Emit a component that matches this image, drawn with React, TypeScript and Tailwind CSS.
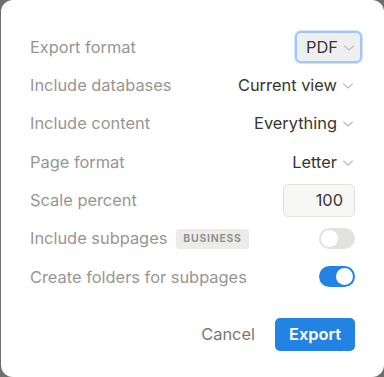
import React from "react";

function Chevron() {
  return (
    <svg width="12" height="10" viewBox="0 0 12 10" className="ml-[5px] mt-[1px]">
      <path d="M1.5 3 L6 7 L10.5 3" fill="none" stroke="#bdbcb9" strokeWidth="1.1" strokeLinecap="round" strokeLinejoin="round" />
    </svg>
  );
}

function Row({ label, children }: { label: React.ReactNode; children: React.ReactNode }) {
  return (
    <div className="flex h-[38.3px] items-center justify-between">
      <div className="flex items-center text-[16.4px] text-[#979693]">{label}</div>
      <div className="flex items-center">{children}</div>
    </div>
  );
}

function Select({ value }: { value: string }) {
  return (
    <div className="flex items-center pr-[1px] text-[16.4px] text-[#37352f]">
      {value}
      <Chevron />
    </div>
  );
}

function Toggle({ on }: { on: boolean }) {
  return (
    <div
      className={`flex h-[21px] w-[36px] items-center rounded-full p-[2px] ${
        on ? "justify-end bg-[#2383e2]" : "justify-start bg-[#e3e2e0]"
      }`}
    >
      <div className="h-[17px] w-[17px] rounded-full bg-white" />
    </div>
  );
}

export default function App() {
  return (
    <div className="h-[377px] w-[384px] bg-[#6f6f6f] pl-[1px]" style={{ fontFamily: "Inter, 'Noto Sans', sans-serif" }}>
      <div className="flex h-full flex-col rounded-[12px] bg-white pl-[29px] pr-[29px] pt-[28px]">
        <Row label="Export format">
          <div className="-mr-[7px] flex h-[32px] items-center rounded-[6px] border-2 border-[#a3c8f5] bg-[#efefef] pl-[9px] pr-[5px] text-[16.4px] text-[#37352f] shadow-[0_0_0_1px_#d2e4fa]">
            PDF
            <Chevron />
          </div>
        </Row>
        <Row label="Include databases">
          <Select value="Current view" />
        </Row>
        <Row label="Include content">
          <Select value="Everything" />
        </Row>
        <Row label="Page format">
          <Select value="Letter" />
        </Row>
        <Row label="Scale percent">
          <div className="flex h-[33px] w-[72px] items-center justify-end rounded-[5px] border border-[#e3e2e0] bg-[#f7f7f5] pr-[11px] text-[16.4px] text-[#37352f]">
            100
          </div>
        </Row>
        <Row
          label={
            <>
              Include subpages
              <span className="ml-[9px] rounded-[3px] bg-[#ebebea] px-[7px] py-[2px] text-[10.5px] font-semibold tracking-[0.07em] text-[#8c8b88]">
                BUSINESS
              </span>
            </>
          }
        >
          <Toggle on={false} />
        </Row>
        <Row label="Create folders for subpages">
          <Toggle on={true} />
        </Row>
        <div className="mt-[22px] flex items-center justify-end gap-[20px]">
          <button className="text-[16.4px] text-[#787774]">Cancel</button>
          <button className="h-[33px] w-[80px] rounded-[5px] bg-[#2383e2] text-[16.4px] font-semibold text-white">
            Export
          </button>
        </div>
      </div>
    </div>
  );
}
